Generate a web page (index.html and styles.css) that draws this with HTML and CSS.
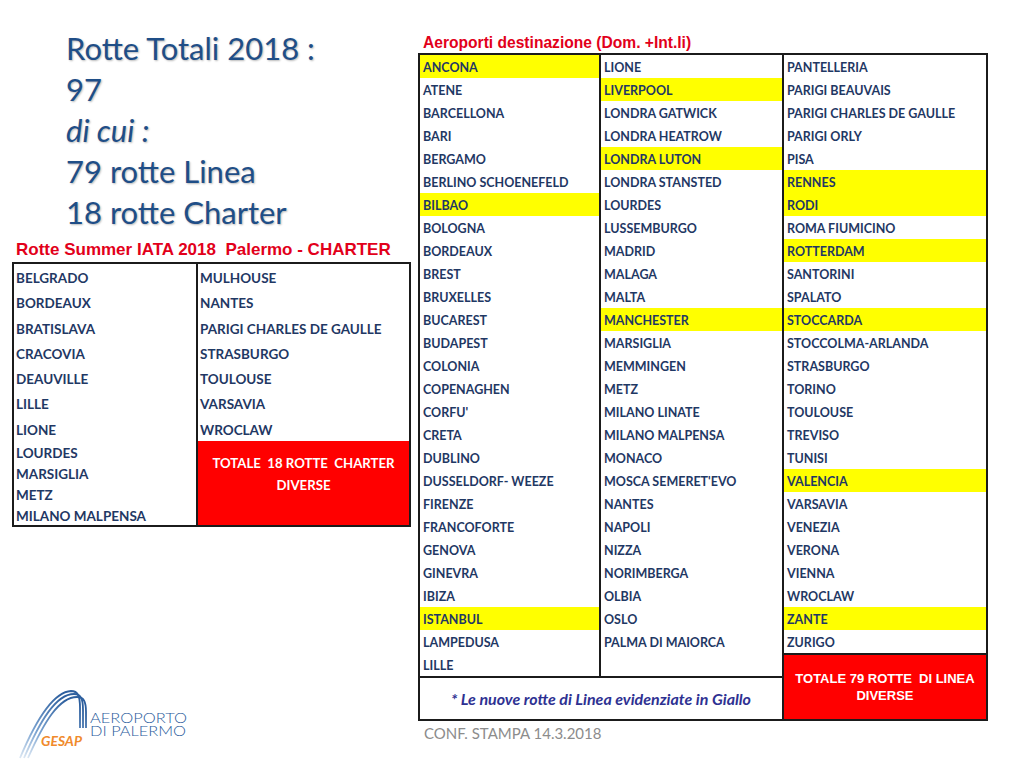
FILE: index.html
```html
<!DOCTYPE html>
<html lang="it">
<head>
<meta charset="utf-8">
<title>Rotte 2018 Palermo</title>
<link rel="stylesheet" href="styles.css">
</head>
<body>
<div class="page">
  <div class="left">
    <div class="title">
      <div>Rotte Totali 2018 :</div>
      <div>97</div>
      <div class="it">di cui :</div>
      <div>79 rotte Linea</div>
      <div>18 rotte Charter</div>
    </div>
    <div class="charter-title">Rotte Summer IATA 2018  Palermo - CHARTER</div>
    <div class="charter">
      <div class="ccol">
        <div class="crow">BELGRADO</div>
        <div class="crow">BORDEAUX</div>
        <div class="crow">BRATISLAVA</div>
        <div class="crow">CRACOVIA</div>
        <div class="crow">DEAUVILLE</div>
        <div class="crow">LILLE</div>
        <div class="crow">LIONE</div>
        <div class="crow sm">LOURDES</div>
        <div class="crow sm">MARSIGLIA</div>
        <div class="crow sm">METZ</div>
        <div class="crow sm">MILANO MALPENSA</div>
      </div>
      <div class="ccol ccol2">
        <div class="crow">MULHOUSE</div>
        <div class="crow">NANTES</div>
        <div class="crow">PARIGI CHARLES DE GAULLE</div>
        <div class="crow">STRASBURGO</div>
        <div class="crow">TOULOUSE</div>
        <div class="crow">VARSAVIA</div>
        <div class="crow">WROCLAW</div>
        <div class="ctotal">TOTALE  18 ROTTE  CHARTER<br>DIVERSE</div>
      </div>
    </div>
    <div class="logo">
      <svg width="190" height="75" viewBox="10 685 190 75" aria-label="Aeroporto di Palermo GESAP">
        <defs>
          <linearGradient id="arc" x1="0" y1="1" x2="0.6" y2="0">
            <stop offset="0" stop-color="#dbe7f3"/>
            <stop offset="0.4" stop-color="#7aa2d0"/>
            <stop offset="1" stop-color="#2d5f9e"/>
          </linearGradient>
        </defs>
        <g fill="none" stroke="url(#arc)" stroke-width="1.8">
          <path d="M20 758 C36 720, 53 692, 71 691 C78 691, 80 696, 80 708 L80 728"/>
          <path d="M24 758 C40 721, 56 694, 74 694 C81 694, 83 699, 83 710 L83 728"/>
          <path d="M28 758 C44 722, 59 697, 77 697 C84 697, 86 702, 86 712 L86 728"/>
        </g>
        <text x="90" y="723" class="lg-main" textLength="97" lengthAdjust="spacingAndGlyphs">AEROPORTO</text>
        <text x="90" y="736" class="lg-main" textLength="96" lengthAdjust="spacingAndGlyphs">DI PALERMO</text>
        <text x="41" y="746" class="lg-gesap" textLength="41" lengthAdjust="spacingAndGlyphs">GESAP</text>
      </svg>
    </div>
  </div>

  <div class="right">
    <div class="dest-title">Aeroporti destinazione (Dom. +Int.li)</div>
    <div class="dest">
      <div class="dleft">
        <div class="dcols">
          <div class="dcol c1">
            <div class="drow y">ANCONA</div>
            <div class="drow">ATENE</div>
            <div class="drow">BARCELLONA</div>
            <div class="drow">BARI</div>
            <div class="drow">BERGAMO</div>
            <div class="drow">BERLINO SCHOENEFELD</div>
            <div class="drow y">BILBAO</div>
            <div class="drow">BOLOGNA</div>
            <div class="drow">BORDEAUX</div>
            <div class="drow">BREST</div>
            <div class="drow">BRUXELLES</div>
            <div class="drow">BUCAREST</div>
            <div class="drow">BUDAPEST</div>
            <div class="drow">COLONIA</div>
            <div class="drow">COPENAGHEN</div>
            <div class="drow">CORFU'</div>
            <div class="drow">CRETA</div>
            <div class="drow">DUBLINO</div>
            <div class="drow">DUSSELDORF- WEEZE</div>
            <div class="drow">FIRENZE</div>
            <div class="drow">FRANCOFORTE</div>
            <div class="drow">GENOVA</div>
            <div class="drow">GINEVRA</div>
            <div class="drow">IBIZA</div>
            <div class="drow y">ISTANBUL</div>
            <div class="drow">LAMPEDUSA</div>
            <div class="drow">LILLE</div>
          </div>
          <div class="dcol c2">
            <div class="drow">LIONE</div>
            <div class="drow y">LIVERPOOL</div>
            <div class="drow">LONDRA GATWICK</div>
            <div class="drow">LONDRA HEATROW</div>
            <div class="drow y">LONDRA LUTON</div>
            <div class="drow">LONDRA STANSTED</div>
            <div class="drow">LOURDES</div>
            <div class="drow">LUSSEMBURGO</div>
            <div class="drow">MADRID</div>
            <div class="drow">MALAGA</div>
            <div class="drow">MALTA</div>
            <div class="drow y">MANCHESTER</div>
            <div class="drow">MARSIGLIA</div>
            <div class="drow">MEMMINGEN</div>
            <div class="drow">METZ</div>
            <div class="drow">MILANO LINATE</div>
            <div class="drow">MILANO MALPENSA</div>
            <div class="drow">MONACO</div>
            <div class="drow">MOSCA SEMERET'EVO</div>
            <div class="drow">NANTES</div>
            <div class="drow">NAPOLI</div>
            <div class="drow">NIZZA</div>
            <div class="drow">NORIMBERGA</div>
            <div class="drow">OLBIA</div>
            <div class="drow">OSLO</div>
            <div class="drow">PALMA DI MAIORCA</div>
          </div>
        </div>
        <div class="note">* Le nuove rotte di Linea evidenziate in Giallo</div>
      </div>
      <div class="dcol c3">
        <div class="drow">PANTELLERIA</div>
        <div class="drow">PARIGI BEAUVAIS</div>
        <div class="drow">PARIGI CHARLES DE GAULLE</div>
        <div class="drow">PARIGI ORLY</div>
        <div class="drow">PISA</div>
        <div class="drow y">RENNES</div>
        <div class="drow y">RODI</div>
        <div class="drow">ROMA FIUMICINO</div>
        <div class="drow y">ROTTERDAM</div>
        <div class="drow">SANTORINI</div>
        <div class="drow">SPALATO</div>
        <div class="drow y">STOCCARDA</div>
        <div class="drow">STOCCOLMA-ARLANDA</div>
        <div class="drow">STRASBURGO</div>
        <div class="drow">TORINO</div>
        <div class="drow">TOULOUSE</div>
        <div class="drow">TREVISO</div>
        <div class="drow">TUNISI</div>
        <div class="drow y">VALENCIA</div>
        <div class="drow">VARSAVIA</div>
        <div class="drow">VENEZIA</div>
        <div class="drow">VERONA</div>
        <div class="drow">VIENNA</div>
        <div class="drow">WROCLAW</div>
        <div class="drow y">ZANTE</div>
        <div class="drow">ZURIGO</div>
        <div class="dtotal">TOTALE 79 ROTTE  DI LINEA<br>DIVERSE</div>
      </div>
    </div>
    <div class="footer">CONF. STAMPA 14.3.2018</div>
  </div>
</div>
</body>
</html>
```
FILE: styles.css
```css
* { box-sizing: border-box; }
html, body { margin: 0; padding: 0; background: #fff; }
body { font-family: Lato, "Open Sans", "Liberation Sans", sans-serif; }

.page {
  width: 1024px;
  height: 768px;
  display: flex;
  overflow: hidden;
}

/* ---------- left column ---------- */
.left {
  width: 418px;
  flex: 0 0 418px;
  display: flex;
  flex-direction: column;
}
.title {
  margin: 28px 0 0 66px;
  font-family: Lato, "Open Sans", sans-serif;
  font-size: 31px;
  line-height: 41px;
  color: #1f4e87;
  text-shadow: 1px 1px 2px rgba(0, 0, 0, 0.28);
}
.title .it { font-style: italic; }

.charter-title {
  margin: 7px 0 0 16px;
  font-family: "Liberation Sans", Arial, sans-serif;
  font-weight: bold;
  font-size: 17px;
  line-height: 20px;
  color: #e2001a;
  white-space: pre;
}
.charter {
  margin: 2px 0 0 12px;
  width: 399px;
  border: 2px solid #1b1b1b;
  display: flex;
}
.ccol { width: 182px; display: flex; flex-direction: column; }
.ccol2 { width: 213px; border-left: 2px solid #1b1b1b; }
.crow {
  height: 25.3px;
  padding: 3px 0 0 2px;
  font-weight: bold;
  font-size: 13.5px;
  line-height: 22px;
  color: #1f3864;
  white-space: nowrap;
}
.crow.sm { height: 21px; padding-top: 2px; line-height: 20px; }
.ctotal {
  flex: 1;
  background: #ff0000;
  color: #fff;
  font-weight: bold;
  font-size: 13.2px;
  line-height: 22px;
  text-align: center;
  padding-top: 11px;
  white-space: pre-wrap;
}

.logo {
  margin-top: 158px;
  margin-left: 10px;
  height: 75px;
}
.logo svg { display: block; }
.lg-main {
  font-family: Lato, "Open Sans", sans-serif;
  font-weight: 300;
  font-size: 14px;
  fill: #2a5b9c;
}
.lg-gesap {
  font-family: Lato, "Open Sans", sans-serif;
  font-weight: bold;
  font-style: italic;
  font-size: 13px;
  fill: #f08a2c;
}

/* ---------- right column ---------- */
.right {
  flex: 1;
  display: flex;
  flex-direction: column;
}
.dest-title {
  margin: 34px 0 0 5px;
  font-family: "Liberation Sans", Arial, sans-serif;
  font-weight: bold;
  font-size: 15.6px;
  line-height: 18px;
  color: #e2001a;
}
.dest {
  margin-top: 1px;
  width: 570px;
  border: 2px solid #1b1b1b;
  display: flex;
}
.dleft { width: 362px; display: flex; flex-direction: column; }
.dcols { display: flex; }
.dcol { display: flex; flex-direction: column; }
.c1 { width: 179px; }
.c2 { width: 183px; border-left: 2px solid #1b1b1b; }
.c3 { flex: 1; border-left: 2px solid #1b1b1b; }
.drow {
  height: 23px;
  padding: 3px 0 0 3px;
  font-weight: bold;
  font-size: 12.5px;
  line-height: 20px;
  color: #1f3864;
  white-space: nowrap;
}
.drow.y { background: #ffff00; }
.note {
  border-top: 2px solid #1b1b1b;
  height: 43px;
  display: flex;
  align-items: center;
  justify-content: center;
  font-weight: bold;
  font-style: italic;
  font-size: 16px;
  color: #2e3192;
}
.dtotal {
  flex: 1;
  border-top: 2px solid #1b1b1b;
  background: #ff0000;
  color: #fff;
  font-family: "Liberation Sans", Arial, sans-serif;
  font-weight: bold;
  font-size: 13px;
  line-height: 17px;
  text-align: center;
  display: flex;
  align-items: center;
  justify-content: center;
  white-space: pre-wrap;
}
.footer {
  margin: 2px 0 0 6px;
  font-size: 15px;
  line-height: 20px;
  color: #8c8c8c;
}
```
